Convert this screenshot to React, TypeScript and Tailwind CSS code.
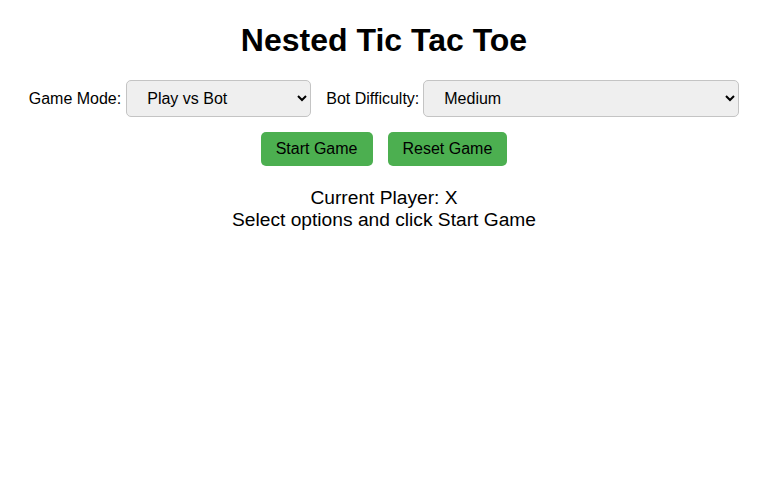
import * as React from "react";

export default function App() {
  const [mode, setMode] = React.useState("bot");
  const [difficulty, setDifficulty] = React.useState("medium");

  return (
    <div className="min-h-[480px] bg-white text-black text-center font-['Liberation_Sans',Arial,sans-serif]">
      <div className="pt-[22px]">
        <h1 className="text-[32px] font-bold leading-[37px] mb-[21px]">Nested Tic Tac Toe</h1>

        {/* Options */}
        <div className="flex justify-center items-center text-base">
          <label className="mr-[5px]">Game Mode:</label>
          <select
            value={mode}
            onChange={(e) => setMode(e.target.value)}
            className="w-[185px] h-[37px] px-4 py-2 border border-[#c4c4c4] rounded-[5px] bg-[#efefef] text-base"
          >
            <option value="bot">Play vs Bot</option>
            <option value="human">Play vs Human</option>
          </select>
          <label className="ml-[15px] mr-[4px]">Bot Difficulty:</label>
          <select
            value={difficulty}
            onChange={(e) => setDifficulty(e.target.value)}
            className="w-[316px] h-[37px] px-4 py-2 border border-[#c4c4c4] rounded-[5px] bg-[#efefef] text-base"
          >
            <option value="easy">Easy</option>
            <option value="medium">Medium</option>
            <option value="hard">Hard</option>
          </select>
        </div>

        {/* Buttons */}
        <div className="flex justify-center gap-[15px] mt-[15px]">
          <button className="h-[34px] px-[15px] bg-[#4caf50] text-black text-base rounded-[5px]">Start Game</button>
          <button className="h-[34px] px-[15px] bg-[#4caf50] text-black text-base rounded-[5px]">Reset Game</button>
        </div>

        {/* Status */}
        <div className="mt-[21px] text-[19.2px] leading-[22px]">
          <div>Current Player: X</div>
          <div>Select options and click Start Game</div>
        </div>
      </div>
    </div>
  );
}
